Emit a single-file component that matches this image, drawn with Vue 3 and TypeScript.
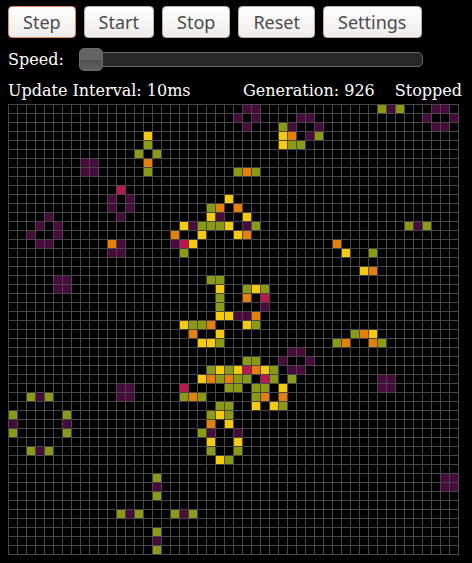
<script setup lang="ts">
import { computed, onBeforeUnmount, ref } from 'vue'

type AgeCode = 'g' | 'y' | 'o' | 'r' | 'p'

interface Cell {
  row: number
  col: number
  age: number
}

const SIZE = 50
const PITCH = 9
const BOARD = SIZE * PITCH + 1
const AGES: AgeCode[] = ['g', 'y', 'o', 'r', 'p']

// Live cells per row, written as age letter + column.
const pattern: Record<number, string> = {
  0: 'p26 p27 g41 p42 g43 p47 p48',
  1: 'p25 p27 p32 p33 p46 p49',
  2: 'p26 g30 p31 p34 p47 p48',
  3: 'y15 y30 o31 p33 g34',
  4: 'g15 y30 g31 g32',
  5: 'g14 g16',
  6: 'p8 p9 o15',
  7: 'p8 p9 g15 g25 o26 g27',
  9: 'r12',
  10: 'p11 p13 y24',
  11: 'p11 p13 g22 o23 o25',
  12: 'p4 p12 y22 p23 y26',
  13: 'p3 p5 y19 p20 g21 g22 g23 y24 p26 g27 g44 p45 g46',
  14: 'p2 p5 o18 y21 y25 o26',
  15: 'p3 p4 o11 p12 p18 r19 y20 o36',
  16: 'p11 p12 g19 y37 g40',
  18: 'y39 o40',
  19: 'p5 p6 g22 g23',
  20: 'p5 p6 y23 g26 y27 g28',
  21: 'g23 o26 r28',
  22: 'g23 p28',
  23: 'y23 y24 p25 p26 o27',
  24: 'y19 g20 g21 o22 y26 g27',
  25: 'o20 y23 g38 o39 y40',
  26: 'y21 y22 g23 g36 o37 o40 g41',
  27: 'p31 p32',
  28: 'g26 g27 p30 p33',
  29: 'g22 y23 g24 y25 r26 o27 y28 g29 p31 p32',
  30: 'y21 o22 g23 o24 g25 g26 r28 g29 g31 p41 p42',
  31: 'p12 p13 r19 g24 g25 g27 g28 y30 p41 p42',
  32: 'g2 p3 g4 p12 p13 g19 o20 g21 g27 o28 o30',
  33: 'g23 g24 y27 y29 g30',
  34: 'g0 g6 g22 y23 g24',
  35: 'p0 p6 o22 y24',
  36: 'g0 g6 g21 p22 p25',
  37: 'y22 y25',
  38: 'g2 p3 g4 g22 g25',
  39: 'y23 g24',
  41: 'g16 p48 p49',
  42: 'p16 p48 p49',
  43: 'g16',
  45: 'g12 p13 g14 g18 p19 g20',
  47: 'g16',
  48: 'p16',
  49: 'g16',
}

function load(): number[] {
  const cells: number[] = new Array(SIZE * SIZE).fill(0)
  for (const [row, entries] of Object.entries(pattern)) {
    for (const entry of entries.split(' ')) {
      cells[Number(row) * SIZE + Number(entry.slice(1))] = AGES.indexOf(entry[0] as AgeCode) + 1
    }
  }
  return cells
}

const grid = ref<number[]>(load())
const generation = ref(926)
const interval = ref(10)
const running = ref(false)
let timer: number | undefined

const liveCells = computed<Cell[]>(() =>
  grid.value
    .map((age, i) => ({ row: Math.floor(i / SIZE), col: i % SIZE, age }))
    .filter((cell) => cell.age > 0),
)

const gridLines = computed(() => {
  let d = ''
  for (let i = 0; i <= SIZE; i++) {
    const at = i * PITCH
    d += `M${at} 0h1v${BOARD}h-1zM0 ${at}h${BOARD}v1H0z`
  }
  return d
})

function neighbours(row: number, col: number): number {
  let count = 0
  for (let dr = -1; dr <= 1; dr++) {
    for (let dc = -1; dc <= 1; dc++) {
      if (dr === 0 && dc === 0) continue
      const r = row + dr
      const c = col + dc
      if (r >= 0 && r < SIZE && c >= 0 && c < SIZE && grid.value[r * SIZE + c] > 0) count++
    }
  }
  return count
}

function step() {
  grid.value = grid.value.map((age, i) => {
    const n = neighbours(Math.floor(i / SIZE), i % SIZE)
    if (age > 0) return n === 2 || n === 3 ? Math.min(age + 1, AGES.length) : 0
    return n === 3 ? 1 : 0
  })
  generation.value++
}

function tick() {
  step()
  timer = window.setTimeout(tick, interval.value)
}

function start() {
  if (running.value) return
  running.value = true
  tick()
}

function stop() {
  running.value = false
  window.clearTimeout(timer)
}

function reset() {
  stop()
  grid.value = load()
  generation.value = 0
}

onBeforeUnmount(stop)
</script>

<template>
  <main class="life">
    <div class="toolbar">
      <button type="button" class="btn btn-active" @click="step">Step</button>
      <button type="button" class="btn" @click="start">Start</button>
      <button type="button" class="btn" @click="stop">Stop</button>
      <button type="button" class="btn" @click="reset">Reset</button>
      <button type="button" class="btn">Settings</button>
    </div>

    <div class="speed">
      <label for="speed">Speed:</label>
      <input id="speed" v-model.number="interval" class="slider" type="range" min="10" max="1000" />
    </div>

    <div class="status">
      <span>Update Interval: {{ interval }}ms</span>
      <span class="generation">Generation: {{ generation }}</span>
      <span>{{ running ? 'Running' : 'Stopped' }}</span>
    </div>

    <svg class="board" :viewBox="`0 0 ${BOARD} ${BOARD}`" shape-rendering="crispEdges">
      <path class="lines" :d="gridLines" />
      <rect
        v-for="cell in liveCells"
        :key="cell.row * SIZE + cell.col"
        :class="`age-${cell.age}`"
        :x="cell.col * PITCH + 1"
        :y="cell.row * PITCH + 1"
        width="8"
        height="8"
      />
    </svg>
  </main>
</template>

<style>
body {
  background: #000;
}
</style>

<style scoped>
.life {
  padding: 6px 8px 8px;
  color: #fff;
  font-family: 'DejaVu Serif', serif;
  font-size: 16px;
  line-height: 20px;
}

.toolbar {
  display: flex;
  gap: 8px;
}

.btn {
  height: 32px;
  padding: 0 14px;
  border: 1px solid #b5b1ac;
  border-radius: 4px;
  background: linear-gradient(#fff, #eeecea);
  color: #4c4c4c;
  font-family: 'Noto Sans', sans-serif;
  font-size: 18px;
  line-height: 24px;
}

.btn-active {
  border-color: #dd8b6c;
}

.speed {
  display: flex;
  align-items: center;
  gap: 15px;
  max-width: 415px;
  margin-top: 10px;
}

.slider {
  flex: 1;
  min-width: 0;
  height: 23px;
  margin: 0;
  appearance: none;
  background: transparent;
}

.slider::-webkit-slider-runnable-track {
  box-sizing: border-box;
  height: 15px;
  border: 1px solid #666;
  border-radius: 5px;
  background: #282828;
}

.slider::-webkit-slider-thumb {
  box-sizing: border-box;
  width: 24px;
  height: 23px;
  margin: -5px 0 0 -1px;
  border: 1px solid #6a6a6a;
  border-radius: 5px;
  appearance: none;
  background: linear-gradient(#646464 50%, #505050 50%, #606060);
}

.status {
  display: flex;
  gap: 20px;
  margin-top: 10px;
  padding-right: 2px;
  white-space: nowrap;
}

.generation {
  margin-left: auto;
}

.board {
  display: block;
  width: 100%;
  max-width: 451px;
  margin-top: 3px;
}

.lines {
  fill: #484848;
}

.age-1 {
  fill: #8a9b0f;
}

.age-2 {
  fill: #f8ca00;
}

.age-3 {
  fill: #e97f02;
}

.age-4 {
  fill: #bd1550;
}

.age-5 {
  fill: #490a3d;
}
</style>
